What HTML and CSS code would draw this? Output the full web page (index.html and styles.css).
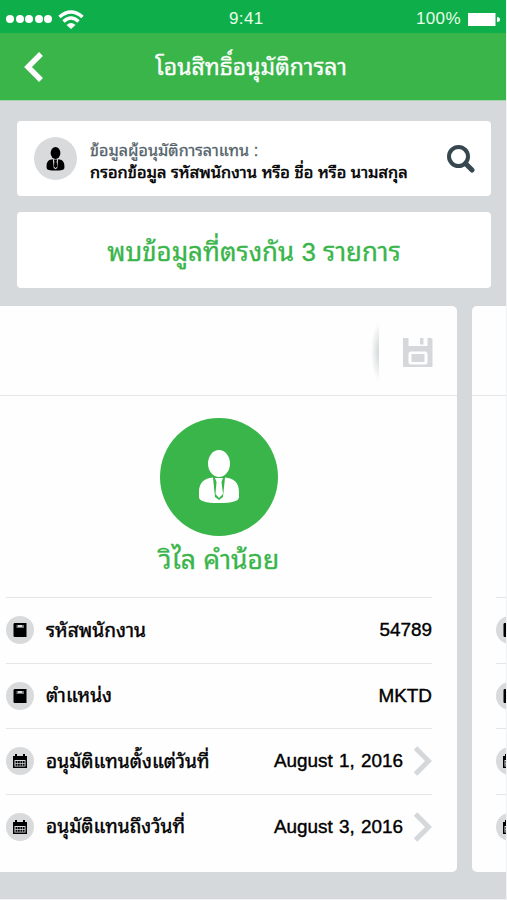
FILE: index.html
```
<!DOCTYPE html>
<html lang="th">
<head>
    <meta charset="UTF-8">
    <meta name="viewport" content="width=device-width, initial-scale=1.0">
    <title>โอนสิทธิ์อนุมัติการลา</title>
    <link rel="stylesheet" href="styles.css">
</head>
<body>
    <!-- shared icons -->
    <svg class="defs">
        <symbol id="user" viewBox="0 0 42 54">
            <ellipse cx="21" cy="13.5" rx="11" ry="13.5"/>
            <path d="M15 27.5 C6 28 1 33 1 42 V47 Q1 53 21 53 Q41 53 41 47 V42 C41 33 36 28 27 27.5 L25 47 L21 50 L17 47 Z"/>
            <path d="M17 28 H25 L23.5 32 L25 44 L21 48 L17.5 44 L18.5 32 Z"/>
        </symbol>
        <symbol id="book" viewBox="0 0 14 14">
            <path d="M1.5 0 H13.5 V14 H1.5 Q.5 14 .5 12.5 V1.5 Q.5 0 1.5 0 Z"/>
            <path d="M3.5 2 H11 V5 H3.5 Z" fill="#777"/>
            <path d="M5 2 H9 V4 H5 Z" fill="#ddd"/>
        </symbol>
        <symbol id="calendar" viewBox="0 0 16 16">
            <path fill-rule="evenodd" d="M1 3 H3 V1 H5 V3 H11 V1 H13 V3 H15 V15 H1 Z M2.5 7 V13.5 H13.5 V7 Z"/>
            <path d="M3.5 8 h2v2h-2z M6 8 h1.8v2h-1.8z M8.4 8 h1.8v2h-1.8z M10.8 8 h1.8v2h-1.8z M3.5 10.8 h2v2h-2z M6 10.8 h1.8v2h-1.8z M8.4 10.8 h1.8v2h-1.8z M10.8 10.8 h1.8v2h-1.8z"/>
        </symbol>
        <symbol id="arrow" viewBox="0 0 18 30">
            <path d="M1.5 2 L14.5 15 L1.5 28" fill="none" stroke="#d5d8db" stroke-width="5"/>
        </symbol>
    </svg>

    <div class="phone">
        <div class="status">
            <div class="signal">
                <i></i><i></i><i></i><i></i><i></i>
                <svg class="wifi" viewBox="0 0 26 19">
                    <path d="M1.5 7 Q13 -3 24.5 7" fill="none" stroke="#fff" stroke-width="3.5"/>
                    <path d="M5.5 11.5 Q13 4.5 20.5 11.5" fill="none" stroke="#fff" stroke-width="3.5"/>
                    <path d="M8.5 15 Q13 11 17.5 15 L13 19 Z" fill="#fff"/>
                </svg>
            </div>
            <span class="time">9:41</span>
            <div class="power">
                <span>100%</span>
                <svg class="battery" viewBox="0 0 32 13"><path d="M0 0 H27.5 V13 H0 Z M29 4 Q32 4 32 6.5 Q32 9 29 9 Z" fill="#fff"/></svg>
            </div>
        </div>

        <div class="header">
            <svg class="back" viewBox="0 0 20 30"><path d="M17 2 L4 15 L17 28" fill="none" stroke="#fff" stroke-width="5.5"/></svg>
            <h1 class="title">โอนสิทธิ์อนุมัติการลา</h1>
        </div>

        <div class="search">
            <span class="search-user"><svg><use href="#user"/></svg></span>
            <div class="search-text">
                <p class="label">ข้อมูลผู้อนุมัติการลาแทน :</p>
                <p class="hint">กรอกข้อมูล รหัสพนักงาน หรือ ชื่อ หรือ นามสกุล</p>
            </div>
            <svg class="glass" viewBox="0 0 28 28">
                <circle cx="11.5" cy="11.5" r="9.5" fill="none" stroke="#37474f" stroke-width="4"/>
                <path d="M18.5 18.5 L25 25" stroke="#37474f" stroke-width="5" stroke-linecap="round"/>
            </svg>
        </div>

        <div class="found"><span>พบข้อมูลที่ตรงกัน 3 รายการ</span></div>

        <div class="slider">
            <div class="card">
                <div class="card-top">
                    <span class="shade"></span>
                    <svg class="save" viewBox="0 0 30 30">
                        <path fill="#d5d8db" fill-rule="evenodd" d="M0 1 H5.5 V9 H24.5 V1 H28 Q29.5 1 29.5 2.5 V30 H0 Z M8 14.5 Q5.5 14.5 5.5 17 V25 Q5.5 27.5 8 27.5 H22 Q24.5 27.5 24.5 25 V17 Q24.5 14.5 22 14.5 Z"/>
                        <path fill="#d5d8db" d="M17 1 H20.5 V7.5 H17 Z M8.5 17 H21.5 V25 H8.5 Z"/>
                    </svg>
                </div>
                <div class="profile">
                    <span class="avatar"><svg><use href="#user"/></svg></span>
                    <h2 class="name">วิไล คำน้อย</h2>
                </div>
                <ul class="list">
                    <li><span class="icon"><svg><use href="#book"/></svg></span><b>รหัสพนักงาน</b><em>54789</em></li>
                    <li><span class="icon"><svg><use href="#book"/></svg></span><b>ตำแหน่ง</b><em>MKTD</em></li>
                    <li><span class="icon"><svg class="cal"><use href="#calendar"/></svg></span><b>อนุมัติแทนตั้งแต่วันที่</b><em>August 1, 2016</em><svg class="next"><use href="#arrow"/></svg></li>
                    <li><span class="icon"><svg class="cal"><use href="#calendar"/></svg></span><b>อนุมัติแทนถึงวันที่</b><em>August 3, 2016</em><svg class="next"><use href="#arrow"/></svg></li>
                </ul>
            </div>
            <div class="card">
                <div class="card-top"></div>
                <div class="profile"></div>
                <ul class="list list-next">
                    <li><span class="icon"><svg><use href="#book"/></svg></span></li>
                    <li><span class="icon"><svg><use href="#book"/></svg></span></li>
                    <li><span class="icon"><svg class="cal"><use href="#calendar"/></svg></span></li>
                    <li><span class="icon"><svg class="cal"><use href="#calendar"/></svg></span></li>
                </ul>
            </div>
        </div>
    </div>
</body>
</html>
```
FILE: styles.css
```
*{
    margin: 0;
    padding: 0;
    box-sizing: border-box;
}
body{
    font-family: "Liberation Sans", "Noto Sans Thai Looped", Loma, Garuda, Waree, Umpush, "Noto Sans Thai", sans-serif;
    background: #f1f2f3;
}
.defs{
    display: none;
}
.phone{
    width: 506px;
    height: 899px;
    overflow: hidden;
    background: #d6d9dc;
}
/* status bar */
.status{
    display: grid;
    grid-template-columns: 223px 1fr auto;
    align-items: center;
    height: 33px;
    padding: 5px 6px 0 6px;
    background: #0eae4b;
    color: #e9ffe9;
    font-size: 17px;
    letter-spacing: .4px;
}
.signal{
    display: flex;
    align-items: center;
    gap: 1.6px;
}
.signal i{
    width: 8px;
    height: 8px;
    border-radius: 50%;
    background: #fff;
}
.wifi{
    width: 26px;
    height: 19px;
    margin-left: 4px;
}
.power{
    display: flex;
    align-items: center;
    gap: 7px;
}
.battery{
    width: 32px;
    height: 13px;
}
/* title bar */
.header{
    display: grid;
    grid-template-columns: 42px 1fr 42px;
    align-items: center;
    height: 68px;
    padding: 0 4px 0 0;
    background: #39b54a;
    border-bottom: 1px solid #a5d5ac;
}
.back{
    width: 20px;
    height: 30px;
    margin-left: 24px;
}
.title{
    color: #fff;
    text-align: center;
    font-size: 23px;
    font-weight: normal;
    white-space: nowrap;
    padding-bottom: 4px;
    -webkit-text-stroke: .3px #fff;
}
/* search box */
.search{
    display: flex;
    align-items: center;
    width: 474px;
    height: 75px;
    margin: 20px 0 0 17px;
    padding: 0 16px 0 17px;
    background: #fff;
    border-radius: 4px;
}
.search-user{
    display: flex;
    align-items: center;
    justify-content: center;
    width: 43px;
    height: 43px;
    border-radius: 50%;
    background: #d8dadc;
}
.search-user svg{
    width: 19px;
    height: 24px;
}
.search-text{
    flex: 1;
    margin-left: 13px;
    white-space: nowrap;
    line-height: 22px;
    padding-top: 4px;
}
.label{
    color: #53626a;
    font-size: 16.2px;
    -webkit-text-stroke: .3px #53626a;
}
.hint{
    color: #000;
    font-size: 16.5px;
    -webkit-text-stroke: .5px #000;
}
.glass{
    width: 28px;
    height: 28px;
}
.found{
    display: flex;
    align-items: center;
    justify-content: center;
    width: 474px;
    height: 76px;
    margin: 16px 0 0 17px;
    padding-bottom: 2px;
    color: #39b54a;
    background: #fff;
    border-radius: 4px;
    font-size: 25.9px;
    white-space: nowrap;
    -webkit-text-stroke: .3px #39b54a;
}
/* cards */
.slider{
    display: flex;
    gap: 15px;
    margin: 18px 0 0 -19px;
}
.card{
    flex: none;
    width: 476px;
    height: 566px;
    background: #fefefe;
    border-radius: 5px;
}
.card-top{
    display: flex;
    align-items: center;
    justify-content: flex-end;
    height: 90px;
    padding: 3px 24px 0 0;
    border-bottom: 1px solid #e4e6e7;
}
.shade{
    width: 8px;
    height: 58px;
    margin-right: 24px;
    background: radial-gradient(ellipse at right, #d3d7d8, rgba(255,255,255,0) 72%);
}
.save{
    width: 30px;
    height: 30px;
}
.profile{
    display: flex;
    flex-direction: column;
    align-items: center;
    height: 201px;
    padding-top: 22px;
}
.avatar{
    display: flex;
    align-items: center;
    justify-content: center;
    width: 118px;
    height: 118px;
    border-radius: 50%;
    background: #39b54a;
}
.avatar svg{
    width: 42px;
    height: 54px;
    fill: #fff;
}
.name{
    color: #39b54a;
    font-size: 26.5px;
    font-weight: normal;
    line-height: 40px;
    margin-top: 4px;
    -webkit-text-stroke: .3px #39b54a;
}
.list{
    list-style: none;
    padding: 0 25px;
}
.list-next{
    padding-left: 24px;
}
.list li{
    display: flex;
    align-items: center;
    height: 65.5px;
    border-top: 1px solid #e4e6e7;
    font-size: 19.2px;
}
.icon{
    flex: none;
    display: flex;
    align-items: center;
    justify-content: center;
    width: 28px;
    height: 28px;
    margin-right: 12px;
    border-radius: 50%;
    background: #d8dadc;
}
.icon svg{
    width: 14px;
    height: 14px;
}
.icon .cal{
    width: 16px;
    height: 16px;
}
.list b{
    flex: 1;
    font-weight: normal;
    white-space: nowrap;
    padding-bottom: 4px;
    -webkit-text-stroke: .4px #000;
}
.list em{
    font-size: 18.9px;
    font-style: normal;
    word-spacing: 1px;
    -webkit-text-stroke: .4px #000;
}
.next{
    width: 18px;
    height: 30px;
    margin-left: 11px;
}
```
